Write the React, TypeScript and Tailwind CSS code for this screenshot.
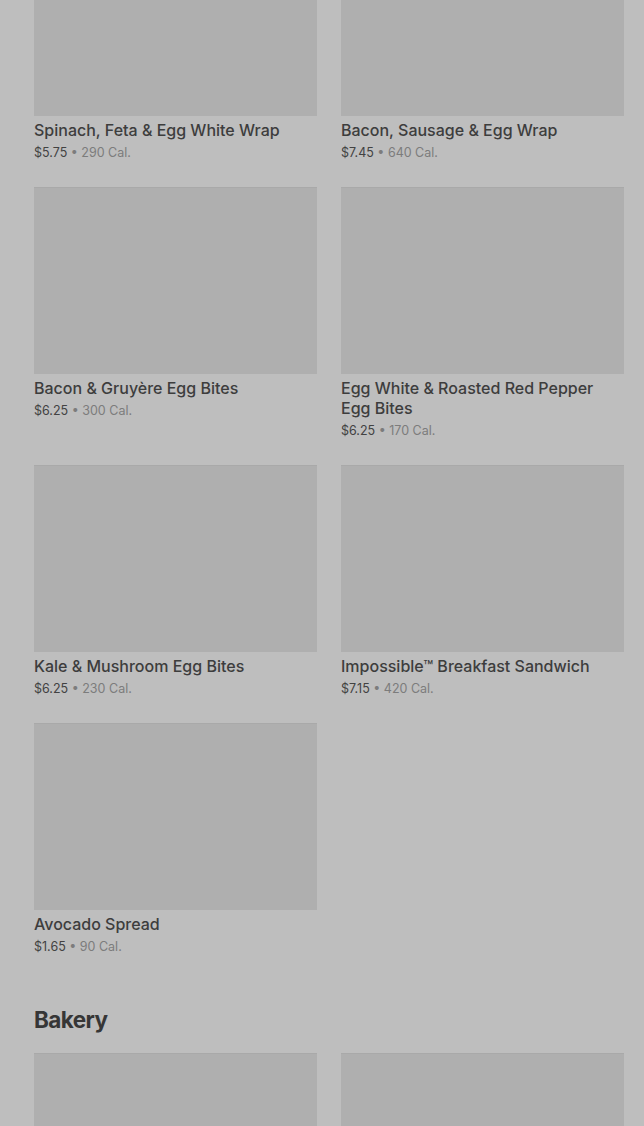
import React from 'react';

interface MenuItem {
  name: string;
  price: string;
  cal: string;
}

const breakfast: MenuItem[] = [
  { name: 'Spinach, Feta & Egg White Wrap', price: '$5.75', cal: '290 Cal.' },
  { name: 'Bacon, Sausage & Egg Wrap', price: '$7.45', cal: '640 Cal.' },
  { name: 'Bacon & Gruyère Egg Bites', price: '$6.25', cal: '300 Cal.' },
  { name: 'Egg White & Roasted Red Pepper Egg Bites', price: '$6.25', cal: '170 Cal.' },
  { name: 'Kale & Mushroom Egg Bites', price: '$6.25', cal: '230 Cal.' },
  { name: 'Impossible™ Breakfast Sandwich', price: '$7.15', cal: '420 Cal.' },
  { name: 'Avocado Spread', price: '$1.65', cal: '90 Cal.' },
];

function ItemCard({ item }: { item: MenuItem }) {
  return (
    <div className="flex flex-col">
      {/* image placeholder (skeleton) */}
      <div className="h-[187px] w-full bg-[#afafaf] border-t border-[#a9a9a9]" />
      <p className="mt-1 text-[16px] leading-[20px] font-medium text-[#3d3d3d]">
        {item.name}
      </p>
      <p className="mt-1 pb-px text-[12.5px] leading-[18px] text-[#424242]">
        {item.price}
        <span className="text-[#7c7c7c]"> • {item.cal}</span>
      </p>
    </div>
  );
}

export default function App() {
  return (
    <div
      className="min-h-[1126px] w-full overflow-hidden bg-[#bebebe]"
      style={{ fontFamily: 'Inter, Roboto, "Noto Sans", sans-serif' }}
    >
      <div className="mt-[-71px] pl-[34px] pr-[20px]">
        <div className="grid grid-cols-2 gap-x-6 gap-y-6">
          {breakfast.map((item) => (
            <ItemCard key={item.name} item={item} />
          ))}
        </div>

        {/* Bakery section */}
        <h2 className="mt-[47px] mb-[17px] text-[22.5px] leading-[32px] font-bold tracking-[-0.6px] text-[#363636]">
          Bakery
        </h2>
        <div className="grid grid-cols-2 gap-x-6">
          <div className="h-[187px] bg-[#afafaf] border-t border-[#a9a9a9]" />
          <div className="h-[187px] bg-[#afafaf] border-t border-[#a9a9a9]" />
        </div>
      </div>
    </div>
  );
}
